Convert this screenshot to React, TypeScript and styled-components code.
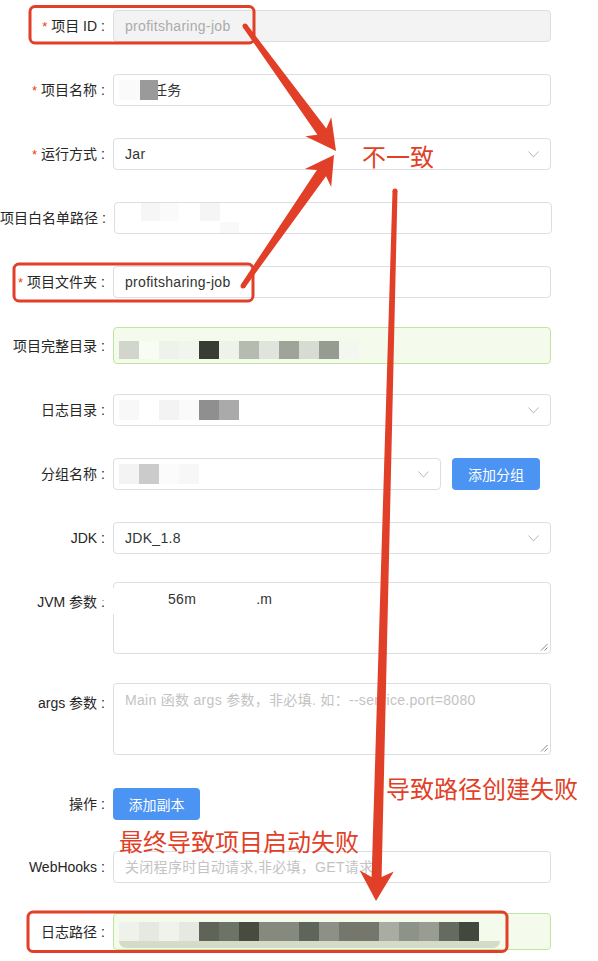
import React from "react";
import styled, { createGlobalStyle } from "styled-components";

const RED = "#e13f27";

const GlobalStyle = createGlobalStyle`
  html, body { margin: 0; padding: 0; background: #ffffff; }
  body { font-family: "Liberation Sans", "Noto Sans CJK SC", sans-serif; }
`;

const Page = styled.div`
  position: relative;
  width: 598px;
  height: 961px;
  overflow: hidden;
  background: #fff;
`;

const Form = styled.div`
  display: flex;
  flex-direction: column;
  padding-top: 10px;
`;

const Item = styled.div<{ $gap: number; $top?: boolean }>`
  position: relative;
  display: flex;
  align-items: ${(p) => (p.$top ? "flex-start" : "center")};
  margin-top: ${(p) => p.$gap}px;
`;

const Label = styled.div<{ $top?: boolean }>`
  flex: 0 0 113px;
  box-sizing: border-box;
  height: ${(p) => (p.$top ? 40 : 32)}px;
  display: flex;
  align-items: center;
  justify-content: flex-end;
  padding-right: 8px;
  font-size: 14px;
  line-height: 20px;
  color: #262626;
  white-space: nowrap;
`;

const Star = styled.span`
  color: #ed4014;
  margin-right: 4px;
  font-size: 13px;
  line-height: 1;
`;

const Colon = styled.span`
  margin-left: 4px;
`;

type Tone = "default" | "disabled" | "success";

const Box = styled.div<{ $w?: number; $h?: number; $tone?: Tone; $padTop?: number }>`
  position: relative;
  box-sizing: border-box;
  flex: none;
  width: ${(p) => p.$w ?? 438}px;
  height: ${(p) => p.$h ?? 32}px;
  display: flex;
  align-items: ${(p) => (p.$padTop !== undefined ? "flex-start" : "center")};
  padding: ${(p) => p.$padTop ?? 0}px 11px 0 11px;
  border: 1px solid ${(p) => (p.$tone === "success" ? "#bfe59e" : "#dcdee2")};
  border-radius: 4px;
  background: ${(p) =>
    p.$tone === "disabled" ? "#f3f3f3" : p.$tone === "success" ? "#f5fbec" : "#fff"};
  color: ${(p) => (p.$tone === "disabled" ? "#ababab" : "#333")};
  font-size: 14px;
  line-height: 20px;
  letter-spacing: 0.3px;
  white-space: nowrap;
  overflow: hidden;
`;

const Placeholder = styled.span`
  color: #c3c3c3;
`;

const Gap = styled.span<{ $w: number }>`
  display: inline-block;
  width: ${(p) => p.$w}px;
`;

const ChevronWrap = styled.span`
  margin-left: auto;
  display: flex;
  align-items: center;
`;

const Chevron = () => (
  <ChevronWrap>
    <svg width="11" height="7" viewBox="0 0 11 7">
      <polyline points="0.5,0.5 5.5,6 10.5,0.5" fill="none" stroke="#b8b8b8" strokeWidth="1" />
    </svg>
  </ChevronWrap>
);

const Grip = styled.svg`
  position: absolute;
  right: 2px;
  bottom: 2px;
`;

const ResizeGrip = () => (
  <Grip width="8" height="8" viewBox="0 0 8 8">
    <line x1="1" y1="7.5" x2="7.5" y2="1" stroke="#8a8a8a" strokeWidth="1" />
    <line x1="4.5" y1="7.5" x2="7.5" y2="4.5" stroke="#8a8a8a" strokeWidth="1" />
  </Grip>
);

const Button = styled.button`
  flex: none;
  box-sizing: border-box;
  width: 88px;
  height: 32px;
  margin-left: 11px;
  border: none;
  border-radius: 4px;
  background: #4b94f4;
  color: #fff;
  font-family: "Liberation Sans", "Noto Sans CJK SC", sans-serif;
  font-size: 14px;
  padding: 0;
`;

const ButtonFlush = styled(Button)`
  margin-left: 0;
  width: 87px;
`;

const Mosaic = styled.div<{ $col?: boolean }>`
  display: flex;
  flex-direction: ${(p) => (p.$col ? "column" : "row")};
  align-items: ${(p) => (p.$col ? "flex-start" : "center")};
  margin-left: -6px;
`;

const MosaicLine = styled.div`
  display: flex;
  align-items: flex-start;
`;

const Cell = styled.span<{ $c: string; $w?: number; $h?: number; $dy?: number; $front?: boolean }>`
  flex: none;
  display: block;
  width: ${(p) => p.$w ?? 20}px;
  height: ${(p) => p.$h ?? 20}px;
  margin-top: ${(p) => p.$dy ?? 0}px;
  background: ${(p) => p.$c};
  position: ${(p) => (p.$front ? "relative" : "static")};
  z-index: ${(p) => (p.$front ? 1 : "auto")};
`;

const UnderText = styled.span`
  margin-left: -5px;
`;

const Band = styled.span`
  display: block;
  width: 381px;
  height: 7px;
  background: #d4dbc7;
  border-radius: 0 0 10px 10px;
`;

const Patch = styled.span<{ $x: number; $y: number; $w: number; $h: number }>`
  position: absolute;
  left: ${(p) => p.$x}px;
  top: ${(p) => p.$y}px;
  width: ${(p) => p.$w}px;
  height: ${(p) => p.$h}px;
  background: #fff;
  z-index: 2;
`;

const Overlay = styled.svg`
  position: absolute;
  left: 0;
  top: 0;
  width: 598px;
  height: 961px;
  pointer-events: none;
  z-index: 5;
`;

const Note = styled.div<{ $x: number; $y: number; $size: number }>`
  position: absolute;
  left: ${(p) => p.$x}px;
  top: ${(p) => p.$y}px;
  font-family: "Noto Sans CJK SC", sans-serif;
  font-size: ${(p) => p.$size}px;
  line-height: 1;
  color: ${RED};
  white-space: nowrap;
  z-index: 4;
`;

function arrowPoints(
  x1: number, y1: number, x2: number, y2: number,
  w1: number, w2: number, hl: number, hw: number
): string {
  const dx = x2 - x1;
  const dy = y2 - y1;
  const L = Math.hypot(dx, dy);
  const ux = dx / L, uy = dy / L;
  const px = -uy, py = ux;
  const bx = x2 - ux * hl, by = y2 - uy * hl;
  const sx = bx + ux * 6, sy = by + uy * 6;
  const pts: [number, number][] = [
    [x1 + (px * w1) / 2, y1 + (py * w1) / 2],
    [sx + (px * w2) / 2, sy + (py * w2) / 2],
    [bx + (px * hw) / 2, by + (py * hw) / 2],
    [x2, y2],
    [bx - (px * hw) / 2, by - (py * hw) / 2],
    [sx - (px * w2) / 2, sy - (py * w2) / 2],
    [x1 - (px * w1) / 2, y1 - (py * w1) / 2],
  ];
  return pts.map(([a, b]) => `${a.toFixed(1)},${b.toFixed(1)}`).join(" ");
}

const pathCells = [
  "#eef2ea", "#e5e9e1", "#eff3eb", "#e5e9e1", "#5f6358", "#6e7368", "#484b40", "#85897e",
  "#85897e", "#5f655a", "#8c9087", "#75776d", "#75776d", "#a8aca3", "#8e9389", "#989c93",
  "#666b60", "#43483e",
];

const fullDirCells = [
  "#d1d5cc", "#f8fcf3", "#eef2ea", "#f2f5ee", "#383d33", "#eef2e9", "#b6bbb0", "#e0e4dc",
  "#9ea498", "#d7dbd2", "#979c91", "#f4f7f0",
];

export default function App() {
  return (
    <Page>
      <GlobalStyle />
      <Form>
        <Item $gap={0}>
          <Label><Star>*</Star>项目 ID<Colon>:</Colon></Label>
          <Box $tone="disabled">profitsharing-job</Box>
        </Item>

        <Item $gap={32}>
          <Label><Star>*</Star>项目名称<Colon>:</Colon></Label>
          <Box>
            <Mosaic>
              <Cell $c="#fafafa" $w={21} />
              <Cell $c="#9a9a9a" $w={18} $front />
              <UnderText>任务</UnderText>
            </Mosaic>
          </Box>
        </Item>

        <Item $gap={32}>
          <Label><Star>*</Star>运行方式<Colon>:</Colon></Label>
          <Box>
            Jar
            <Chevron />
          </Box>
        </Item>

        <Item $gap={32}>
          <Label>项目白名单路径<Colon>:</Colon></Label>
          <Box $padTop={0}>
            <Mosaic>
              <MosaicLine>
                <Cell $c="transparent" $w={21} $h={18} />
                <Cell $c="#f6f6f6" $w={19} $h={18} />
                <Cell $c="#fafafa" $w={19} $h={18} />
                <Cell $c="transparent" $w={21} $h={18} />
                <Cell $c="#f5f5f5" $w={20} $h={18} />
                <Cell $c="#f9f9f9" $w={19} $h={11} $dy={19} />
              </MosaicLine>
            </Mosaic>
          </Box>
        </Item>

        <Item $gap={32}>
          <Label><Star>*</Star>项目文件夹<Colon>:</Colon></Label>
          <Box>profitsharing-job</Box>
        </Item>

        <Item $gap={29}>
          <Label>项目完整目录<Colon>:</Colon></Label>
          <Box $tone="success" $h={37} $padTop={13}>
            <Mosaic>
              {fullDirCells.map((c, i) => (
                <Cell key={i} $c={c} $h={18} />
              ))}
            </Mosaic>
          </Box>
        </Item>

        <Item $gap={30}>
          <Label>日志目录<Colon>:</Colon></Label>
          <Box>
            <Mosaic>
              <Cell $c="#f8f8f8" />
              <Cell $c="transparent" />
              <Cell $c="#f3f3f3" />
              <Cell $c="#fafafa" />
              <Cell $c="#8f8f8f" />
              <Cell $c="#aaaaaa" />
            </Mosaic>
            <Chevron />
          </Box>
        </Item>

        <Item $gap={32}>
          <Label>分组名称<Colon>:</Colon></Label>
          <Box $w={328}>
            <Mosaic>
              <Cell $c="#f3f3f3" />
              <Cell $c="#cbcbcb" />
              <Cell $c="#fbfbfb" />
              <Cell $c="#f7f7f7" />
            </Mosaic>
            <Chevron />
          </Box>
          <Button>添加分组</Button>
        </Item>

        <Item $gap={32}>
          <Label>JDK<Colon>:</Colon></Label>
          <Box>
            JDK_1.8
            <Chevron />
          </Box>
        </Item>

        <Item $gap={28} $top>
          <Label $top>JVM 参数<Colon>:</Colon></Label>
          <Box $h={72} $padTop={6}>
            <Gap $w={43} />
            56m
            <Gap $w={60} />
            .m
            <ResizeGrip />
          </Box>
          <Patch $x={99} $y={6} $w={69} $h={12} />
          <Patch $x={111} $y={12} $w={6} $h={20} />
        </Item>

        <Item $gap={29} $top>
          <Label $top>args 参数<Colon>:</Colon></Label>
          <Box $h={72} $padTop={6}>
            <Placeholder>Main 函数 args 参数，非必填. 如：--service.port=8080</Placeholder>
            <ResizeGrip />
          </Box>
        </Item>

        <Item $gap={33}>
          <Label>操作<Colon>:</Colon></Label>
          <ButtonFlush>添加副本</ButtonFlush>
        </Item>

        <Item $gap={31}>
          <Label>WebHooks<Colon>:</Colon></Label>
          <Box>
            <Placeholder>关闭程序时自动请求,非必填，GET请求</Placeholder>
          </Box>
        </Item>

        <Item $gap={30}>
          <Label>日志路径<Colon>:</Colon></Label>
          <Box $tone="success" $h={37} $padTop={8}>
            <Mosaic $col>
              <MosaicLine>
                {pathCells.map((c, i) => (
                  <Cell key={i} $c={c} $h={19} />
                ))}
              </MosaicLine>
              <Band />
            </Mosaic>
          </Box>
        </Item>
      </Form>

      <Note $x={362} $y={144} $size={24}>不一致</Note>
      <Note $x={386} $y={776} $size={24}>导致路径创建失败</Note>
      <Note $x={119} $y={829} $size={24}>最终导致项目启动失败</Note>

      <Overlay viewBox="0 0 598 961">
        <rect x="30" y="6.5" width="224" height="36.5" rx="5" fill="none" stroke={RED} strokeWidth="3" />
        <rect x="14" y="264" width="239" height="37" rx="5" fill="none" stroke={RED} strokeWidth="3" />
        <rect x="28" y="912" width="479" height="39.5" rx="5" fill="none" stroke={RED} strokeWidth="3" />

        <circle cx="245" cy="26" r="2.5" fill={RED} />
        <polygon points={arrowPoints(245, 26, 336, 151, 5, 11, 30, 32)} fill={RED} />
        <circle cx="243" cy="286" r="2.5" fill={RED} />
        <polygon points={arrowPoints(243, 286, 334, 155, 5, 11, 28, 32)} fill={RED} />
        <circle cx="395" cy="191" r="2.5" fill={RED} />
        <polygon points={arrowPoints(395, 191, 376, 901, 5, 10, 30, 34)} fill={RED} />
      </Overlay>
    </Page>
  );
}
